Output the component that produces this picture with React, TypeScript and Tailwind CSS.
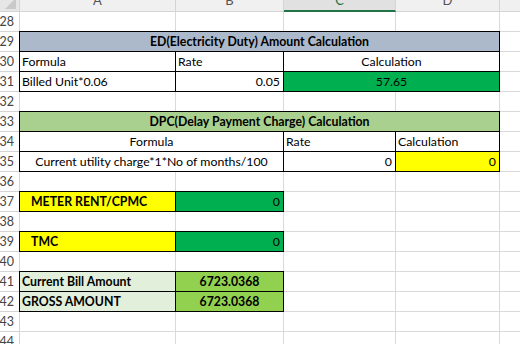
import React from 'react';

type CellProps = {
  span?: 1 | 2 | 4;
  boxed?: boolean;
  align?: 'left' | 'center' | 'right';
  className?: string;
  children?: React.ReactNode;
};

// one worksheet cell; boxed cells get the black outline drawn over the gridlines
function Cell({ span = 1, boxed = false, align = 'left', className = '', children }: CellProps) {
  const spanCls = span === 4 ? 'col-span-4' : span === 2 ? 'col-span-2' : '';
  const borderCls = boxed ? '-mt-px -ml-px border border-black' : 'border-r border-b border-[#dadada]';
  const alignCls = align === 'center' ? 'justify-center' : align === 'right' ? 'justify-end' : 'justify-start';
  return (
    <div className={`${spanCls} ${borderCls} ${alignCls} flex items-center pt-px px-[2px] whitespace-nowrap overflow-hidden ${className}`}>
      {children}
    </div>
  );
}

function RowHead({ n }: { n: number }) {
  return (
    <div className="flex items-center justify-end pr-[5px] pt-px bg-white border-r border-b border-[#d4d4d4] text-[#444] text-[12.5px]">
      {n}
    </div>
  );
}

function Empty({ n }: { n: number }) {
  return (
    <>
      <RowHead n={n} />
      <Cell />
      <Cell />
      <Cell />
      <Cell />
      <Cell />
    </>
  );
}

export default function App() {
  return (
    <div className="w-[520px] h-[344px] overflow-hidden bg-white font-[Lato,sans-serif] text-[12.3px] text-black">
      <div className="-mt-[9px] grid grid-cols-[20px_156px_108px_112px_104px_40px] auto-rows-[20px] grid-rows-[21px]">
        {/* column headers */}
        <div className="relative bg-[#e6e6e6] border-r border-b border-[#d4d4d4]">
          <svg className="absolute right-[3px] bottom-[2px]" width="11" height="11" viewBox="0 0 11 11">
            <polygon points="11,0 11,11 0,11" fill="#c9c9c9" />
          </svg>
        </div>
        <div className="flex items-center justify-center bg-[#f0f0f0] border-r border-b border-[#d4d4d4] text-[#555] text-[13px]">A</div>
        <div className="flex items-center justify-center bg-[#f0f0f0] border-r border-b border-[#d4d4d4] text-[#555] text-[13px]">B</div>
        <div className="flex items-center justify-center bg-[#e1e1e1] border-r border-[#d4d4d4] border-b-2 border-b-[#217346] text-[#217346] text-[13px]">C</div>
        <div className="flex items-center justify-center bg-[#f0f0f0] border-r border-b border-[#d4d4d4] text-[#555] text-[13px]">D</div>
        <div className="bg-[#f0f0f0] border-b border-[#d4d4d4]" />

        <Empty n={28} />

        <RowHead n={29} />
        <Cell span={4} boxed align="center" className="bg-[#acb9ca] font-bold">
          ED(Electricity Duty) Amount Calculation
        </Cell>
        <Cell />

        <RowHead n={30} />
        <Cell boxed>Formula</Cell>
        <Cell boxed>Rate</Cell>
        <Cell span={2} boxed align="center">Calculation</Cell>
        <Cell />

        <RowHead n={31} />
        <Cell boxed>Billed Unit*0.06</Cell>
        <Cell boxed align="right" className="pr-[3px]">0.05</Cell>
        <Cell span={2} boxed align="center" className="bg-[#00b050]">57.65</Cell>
        <Cell />

        <Empty n={32} />

        <RowHead n={33} />
        <Cell span={4} boxed align="center" className="bg-[#a9d08e] font-bold">
          DPC(Delay Payment Charge) Calculation
        </Cell>
        <Cell />

        <RowHead n={34} />
        <Cell span={2} boxed align="center">Formula</Cell>
        <Cell boxed>Rate</Cell>
        <Cell boxed>Calculation</Cell>
        <Cell />

        <RowHead n={35} />
        <Cell span={2} boxed align="center">Current utility charge*1*No of months/100</Cell>
        <Cell boxed align="right" className="pr-[3px]">0</Cell>
        <Cell boxed align="right" className="pr-[3px] bg-[#ffff00]">0</Cell>
        <Cell />

        <Empty n={36} />

        <RowHead n={37} />
        <Cell boxed className="pl-[11px] bg-[#ffff00] font-bold">METER RENT/CPMC</Cell>
        <Cell boxed align="right" className="pr-[3px] bg-[#00b050]">0</Cell>
        <Cell />
        <Cell />
        <Cell />

        <Empty n={38} />

        <RowHead n={39} />
        <Cell boxed className="pl-[11px] bg-[#ffff00] font-bold">TMC</Cell>
        <Cell boxed align="right" className="pr-[3px] bg-[#00b050]">0</Cell>
        <Cell />
        <Cell />
        <Cell />

        <Empty n={40} />

        <RowHead n={41} />
        <Cell boxed className="bg-[#e2efda] font-bold">Current Bill Amount</Cell>
        <Cell boxed align="center" className="bg-[#92d050] font-bold">6723.0368</Cell>
        <Cell />
        <Cell />
        <Cell />

        <RowHead n={42} />
        <Cell boxed className="bg-[#e2efda] font-bold">GROSS AMOUNT</Cell>
        <Cell boxed align="center" className="bg-[#92d050] font-bold">6723.0368</Cell>
        <Cell />
        <Cell />
        <Cell />

        <Empty n={43} />
        <Empty n={44} />
      </div>
    </div>
  );
}
